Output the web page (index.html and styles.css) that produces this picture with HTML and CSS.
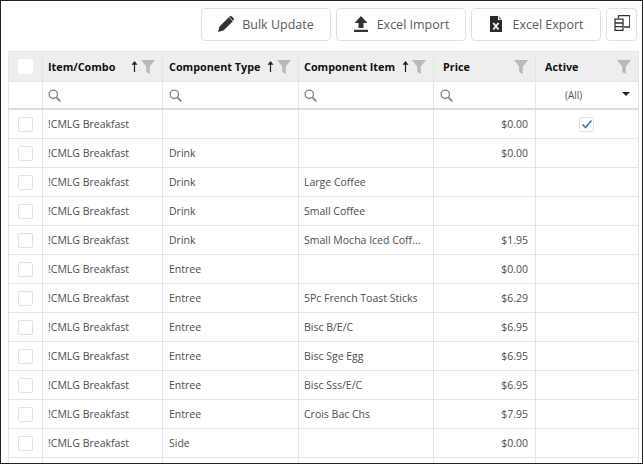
FILE: index.html
```html
<!DOCTYPE html>
<html lang="en">
<head>
    <meta charset="UTF-8">
    <title>Menu Items</title>
    <link rel="stylesheet" href="styles.css">
</head>
<body>
    <svg width="0" height="0" class="defs">
        <symbol id="search" viewBox="0 0 14 14"><circle cx="5.700" cy="5.700" r="4.500" fill="none" stroke="currentColor" stroke-width="1.500"/><path d="M9 9l4.300 4.300" stroke="currentColor" stroke-width="2"/></symbol>
        <symbol id="funnel" viewBox="0 0 14 14"><path d="M0 0h14L8.800 6.500V14L5.200 12V6.500z" fill="currentColor"/></symbol>
        <symbol id="arrow" viewBox="0 0 7 11"><path d="M3.500 0L6.500 3.800H4.100V11H2.900V3.800H.5z" fill="currentColor"/></symbol>
    </svg>
    <div class="page">
        <div class="toolbar">
            <button class="btn"><svg class="btn-icon" viewBox="0 0 16 16"><path d="M0 16l1.500-5.500L10.800 1.200l4 4L5.500 14.500zM11.800.4c.6-.6 1.400-.5 2 0l1.800 1.800c.5.6.6 1.400 0 2l-.7.4-3.900-3.900z" fill="#333"/></svg>Bulk Update</button>
            <button class="btn"><svg class="btn-icon" viewBox="0 0 16 16"><path d="M8 0l6.500 7H10.500v5h-5V7H1.500zM1 13.700h14V16H1z" fill="#333"/></svg>Excel Import</button>
            <button class="btn"><svg class="btn-icon" viewBox="0 0 16 16"><path d="M2 0h8v4h4v12H2z" fill="#2b2b2b"/><path d="M10.800 0L14 3.200H10.800z" fill="#888"/><path d="M5.300 7l5.200 6.500M10.500 7l-5.200 6.500" stroke="#fff" stroke-width="1.800"/></svg>Excel Export</button>
            <button class="btn btn-small"><svg viewBox="0 0 16 16" width="16" height="16"><path d="M4.500 3.500V.7h11.300V12H10" fill="none" stroke="#333" stroke-width="1.300"/><path d="M1 4.200h8V15.300H1zM1 8h8M1 11.700h8" fill="none" stroke="#333" stroke-width="1.300"/></svg></button>
        </div>
        <table class="grid">
            <colgroup>
                <col class="c-check"><col class="c-item"><col class="c-type"><col class="c-comp"><col class="c-price"><col class="c-active">
            </colgroup>
            <thead>
                <tr class="head-row">
                    <th><span class="box box-head"></span></th>
                    <th class="pad-less"><div class="head"><span class="head-text">Item/Combo</span><svg class="sort"><use href="#arrow"/></svg><svg class="funnel"><use href="#funnel"/></svg></div></th>
                    <th><div class="head"><span class="head-text">Component Type</span><svg class="sort"><use href="#arrow"/></svg><svg class="funnel"><use href="#funnel"/></svg></div></th>
                    <th class="pad-less"><div class="head"><span class="head-text">Component Item</span><svg class="sort"><use href="#arrow"/></svg><svg class="funnel"><use href="#funnel"/></svg></div></th>
                    <th class="pad-more"><div class="head"><span class="head-text">Price</span><svg class="funnel"><use href="#funnel"/></svg></div></th>
                    <th class="pad-more"><div class="head"><span class="head-text">Active</span><svg class="funnel"><use href="#funnel"/></svg></div></th>
                </tr>
                <tr class="filter-row">
                    <td></td>
                    <td class="pad-less"><svg class="search"><use href="#search"/></svg></td>
                    <td><svg class="search"><use href="#search"/></svg></td>
                    <td class="pad-less"><svg class="search"><use href="#search"/></svg></td>
                    <td><svg class="search"><use href="#search"/></svg></td>
                    <td><div class="all"><span class="all-text">(All)</span><span class="caret"></span></div></td>
                </tr>
            </thead>
            <tbody>
                <tr><td><span class="box"></span></td><td class="pad-less">!CMLG Breakfast</td><td></td><td class="pad-less"></td><td class="num">$0.00</td><td class="mid"><span class="box box-on"><svg viewBox="0 0 12 12" width="12" height="12"><path d="M1.500 6.500l3 3 6-7" fill="none" stroke="#337ab7" stroke-width="1.600"/></svg></span></td></tr>
                <tr><td><span class="box"></span></td><td class="pad-less">!CMLG Breakfast</td><td>Drink</td><td class="pad-less"></td><td class="num">$0.00</td><td></td></tr>
                <tr><td><span class="box"></span></td><td class="pad-less">!CMLG Breakfast</td><td>Drink</td><td class="pad-less">Large Coffee</td><td></td><td></td></tr>
                <tr><td><span class="box"></span></td><td class="pad-less">!CMLG Breakfast</td><td>Drink</td><td class="pad-less">Small Coffee</td><td></td><td></td></tr>
                <tr><td><span class="box"></span></td><td class="pad-less">!CMLG Breakfast</td><td>Drink</td><td class="pad-less">Small Mocha Iced Coff...</td><td class="num">$1.95</td><td></td></tr>
                <tr><td><span class="box"></span></td><td class="pad-less">!CMLG Breakfast</td><td>Entree</td><td class="pad-less"></td><td class="num">$0.00</td><td></td></tr>
                <tr><td><span class="box"></span></td><td class="pad-less">!CMLG Breakfast</td><td>Entree</td><td class="pad-less">5Pc French Toast Sticks</td><td class="num">$6.29</td><td></td></tr>
                <tr><td><span class="box"></span></td><td class="pad-less">!CMLG Breakfast</td><td>Entree</td><td class="pad-less">Bisc B/E/C</td><td class="num">$6.95</td><td></td></tr>
                <tr><td><span class="box"></span></td><td class="pad-less">!CMLG Breakfast</td><td>Entree</td><td class="pad-less">Bisc Sge Egg</td><td class="num">$6.95</td><td></td></tr>
                <tr><td><span class="box"></span></td><td class="pad-less">!CMLG Breakfast</td><td>Entree</td><td class="pad-less">Bisc Sss/E/C</td><td class="num">$6.95</td><td></td></tr>
                <tr><td><span class="box"></span></td><td class="pad-less">!CMLG Breakfast</td><td>Entree</td><td class="pad-less">Crois Bac Chs</td><td class="num">$7.95</td><td></td></tr>
                <tr><td><span class="box"></span></td><td class="pad-less">!CMLG Breakfast</td><td>Side</td><td class="pad-less"></td><td class="num">$0.00</td><td></td></tr>
                <tr><td></td><td></td><td></td><td></td><td></td><td></td></tr>
            </tbody>
        </table>
    </div>
</body>
</html>
```

FILE: styles.css
```css
html, body {
    margin: 0;
    height: 100%;
}
body {
    font-family: 'Open Sans', 'Noto Sans', sans-serif;
    font-size: 10.5px;
    color: #4d4d4d;
    background: #fff;
    overflow: hidden;
}
.defs {
    display: block;
    height: 0;
}
.page {
    box-sizing: border-box;
    height: 464px;
    padding: 7px 4px 0 7px;
    border: 1px solid #222;
    overflow: hidden;
}
.toolbar {
    display: flex;
    justify-content: flex-end;
    gap: 5px;
    padding-right: 1px;
    height: 33px;
    margin-bottom: 10px;
}
.btn {
    display: flex;
    align-items: center;
    justify-content: center;
    gap: 8px;
    width: 130px;
    height: 33px;
    padding: 0;
    font-family: inherit;
    font-size: 12.5px;
    color: #5a5a5a;
    background: #fff;
    border: 1px solid #e0e0e0;
    border-radius: 4px;
}
.btn-icon {
    width: 16px;
    height: 16px;
    margin-top: -2px;
}
.btn-small {
    width: 31px;
}
.btn-small svg {
    margin-top: -3px;
}
.grid {
    border-collapse: collapse;
    table-layout: fixed;
    width: 630px;
    border: 1px solid #ddd;
}
.c-check { width: 34px; }
.c-item { width: 120px; }
.c-type { width: 136px; }
.c-comp { width: 135px; }
.c-price { width: 102px; }
.c-active { width: 103px; }
th, td {
    border: 1px solid #e6e6e6;
    padding: 0 7px 0 6px;
    height: 28px;
    white-space: nowrap;
    overflow: hidden;
}
th {
    background: #eee;
    color: #111;
    font-size: 10.8px;
    font-weight: 700;
    text-align: left;
    height: 29px;
}
th.pad-less, td.pad-less {
    padding-left: 5px;
}
th.pad-more {
    padding-left: 9px;
}
.head {
    display: flex;
    align-items: center;
    gap: 3px;
}
.head-text {
    flex: 1;
}
.sort {
    width: 7px;
    height: 11px;
    color: #222;
}
.funnel {
    width: 14px;
    height: 14px;
    color: #b9b9b9;
}
.search {
    display: block;
    width: 13px;
    height: 13px;
    color: #8a8a8a;
}
.filter-row td {
    height: 26px;
    border-bottom: 2px solid #ddd;
}
.all {
    display: flex;
    align-items: center;
    padding-left: 23px;
}
.all-text {
    flex: 1;
    font-size: 10px;
    color: #555;
}
.caret {
    width: 0;
    height: 0;
    margin: 0 1px 3px 0;
    border-left: 4px solid transparent;
    border-right: 4px solid transparent;
    border-top: 4px solid #222;
}
.box {
    display: flex;
    align-items: center;
    justify-content: center;
    box-sizing: border-box;
    width: 15px;
    height: 15px;
    margin: 0 auto;
    background: #fff;
    border: 1px solid #e2e2e2;
    border-radius: 2px;
}
.box-head {
    border-color: #fff;
}
.num {
    text-align: right;
}
.mid {
    text-align: center;
}
```
